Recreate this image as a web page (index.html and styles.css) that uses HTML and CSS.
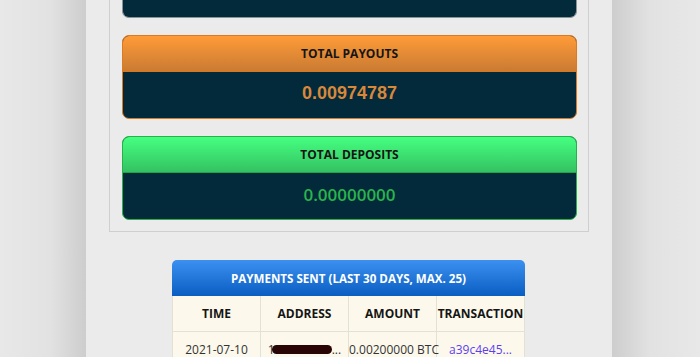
FILE: index.html
```html
<!DOCTYPE html>
<html>
<head>
<meta charset="utf-8">
<link rel="stylesheet" href="styles.css">
</head>
<body>
<div class="page">
  <div class="panel">
    <div class="card card-top"></div>
    <div class="card card-orange">
      <div class="card-head">TOTAL PAYOUTS</div>
      <div class="card-body value-orange">0.00974787</div>
    </div>
    <div class="card card-green">
      <div class="card-head">TOTAL DEPOSITS</div>
      <div class="card-body value-green">0.00000000</div>
    </div>
  </div>
  <div class="payments">
    <div class="payments-title">PAYMENTS SENT (LAST 30 DAYS, MAX. 25)</div>
    <table class="ptable">
      <tr>
        <th>TIME</th><th>ADDRESS</th><th>AMOUNT</th><th>TRANSACTION</th>
      </tr>
      <tr>
        <td>2021-07-10</td>
        <td><span class="addr">1<span class="redact"></span>...</span></td>
        <td>0.00200000 BTC</td>
        <td><a class="tx" href="#">a39c4e45...</a></td>
      </tr>
    </table>
  </div>
</div>
</body>
</html>
```
FILE: styles.css
```css
html, body { margin: 0; padding: 0; }
body {
  height: 357px;
  overflow: hidden;
  font-family: "Open Sans", "Liberation Sans", sans-serif;
  background: linear-gradient(to right, #e8e8e8 0px, #e2e2e2 50px, #cdcdcd 86px, #ebebeb 86px, #ebebeb 612px, #cdcdcd 612px, #e2e2e2 650px, #e8e8e8 700px);
}
.page {
  width: 526px;
  margin: 0 auto;
}
.panel {
  margin-left: 22px;
  width: 480px;
  box-sizing: border-box;
  border: 1px solid #cfcfcf;
  border-top: none;
  padding: 0 11px 11px 12px;
  display: flex;
  flex-direction: column;
  gap: 17px;
}
.card {
  border-radius: 7px;
  overflow: hidden;
  background: #022a3b;
}
.card-top {
  height: 18px;
  border: 1px solid #8a9398;
  border-top: none;
  border-radius: 0 0 7px 7px;
  box-sizing: border-box;
}
.card-head {
  height: 35px;
  display: flex;
  align-items: center;
  justify-content: center;
  font-weight: 700;
  font-size: 12px;
  color: #151515;
}
.card-body {
  height: 46px;
  box-sizing: border-box;
  padding-bottom: 4px;
  display: flex;
  align-items: center;
  justify-content: center;
  font-weight: 700;
}
.card-orange { border: 1px solid #dc7a22; }
.card-orange .card-head {
  background: linear-gradient(#ff9b38, #c97b33);
  border-bottom: 1px solid #dc7618;
}
.value-orange {
  color: #d8883a;
  font-family: "Liberation Sans", Arial, sans-serif;
  font-size: 18px;
}
.card-green { border: 1px solid #27b14a; }
.card-green .card-head {
  background: linear-gradient(#45ff80, #34c262);
  border-bottom: 1px solid #22a443;
}
.value-green {
  color: #2bb44b;
  font-weight: 600;
  font-size: 17px;
}
.payments {
  width: 353px;
  margin: 28px 0 0 85px;
}
.payments-title {
  height: 36px;
  border-radius: 5px 5px 0 0;
  background: linear-gradient(#3b90f0, #0a5ec2);
  color: #fff;
  font-weight: 700;
  font-size: 11.6px;
  display: flex;
  align-items: center;
  justify-content: center;
}
.ptable {
  width: 100%;
  border-collapse: collapse;
  table-layout: fixed;
  background: #fcf9ec;
}
.ptable th, .ptable td {
  border: 1px solid #e3e1d6;
  height: 35px;
  padding: 0;
  text-align: center;
  white-space: nowrap;
  overflow: visible;
}
.ptable tr:first-child th { border-top: none; }
.ptable th {
  font-size: 12px;
  font-weight: 700;
  color: #151515;
}
.ptable td {
  font-size: 12px;
  color: #333;
}
.addr { display: inline-flex; align-items: center; }
.redact {
  display: inline-block;
  width: 60px;
  height: 9px;
  border-radius: 5px;
  background: #2a0505;
  margin-left: -3px;
}
.tx { color: #5b3ff0; text-decoration: none; }
```
